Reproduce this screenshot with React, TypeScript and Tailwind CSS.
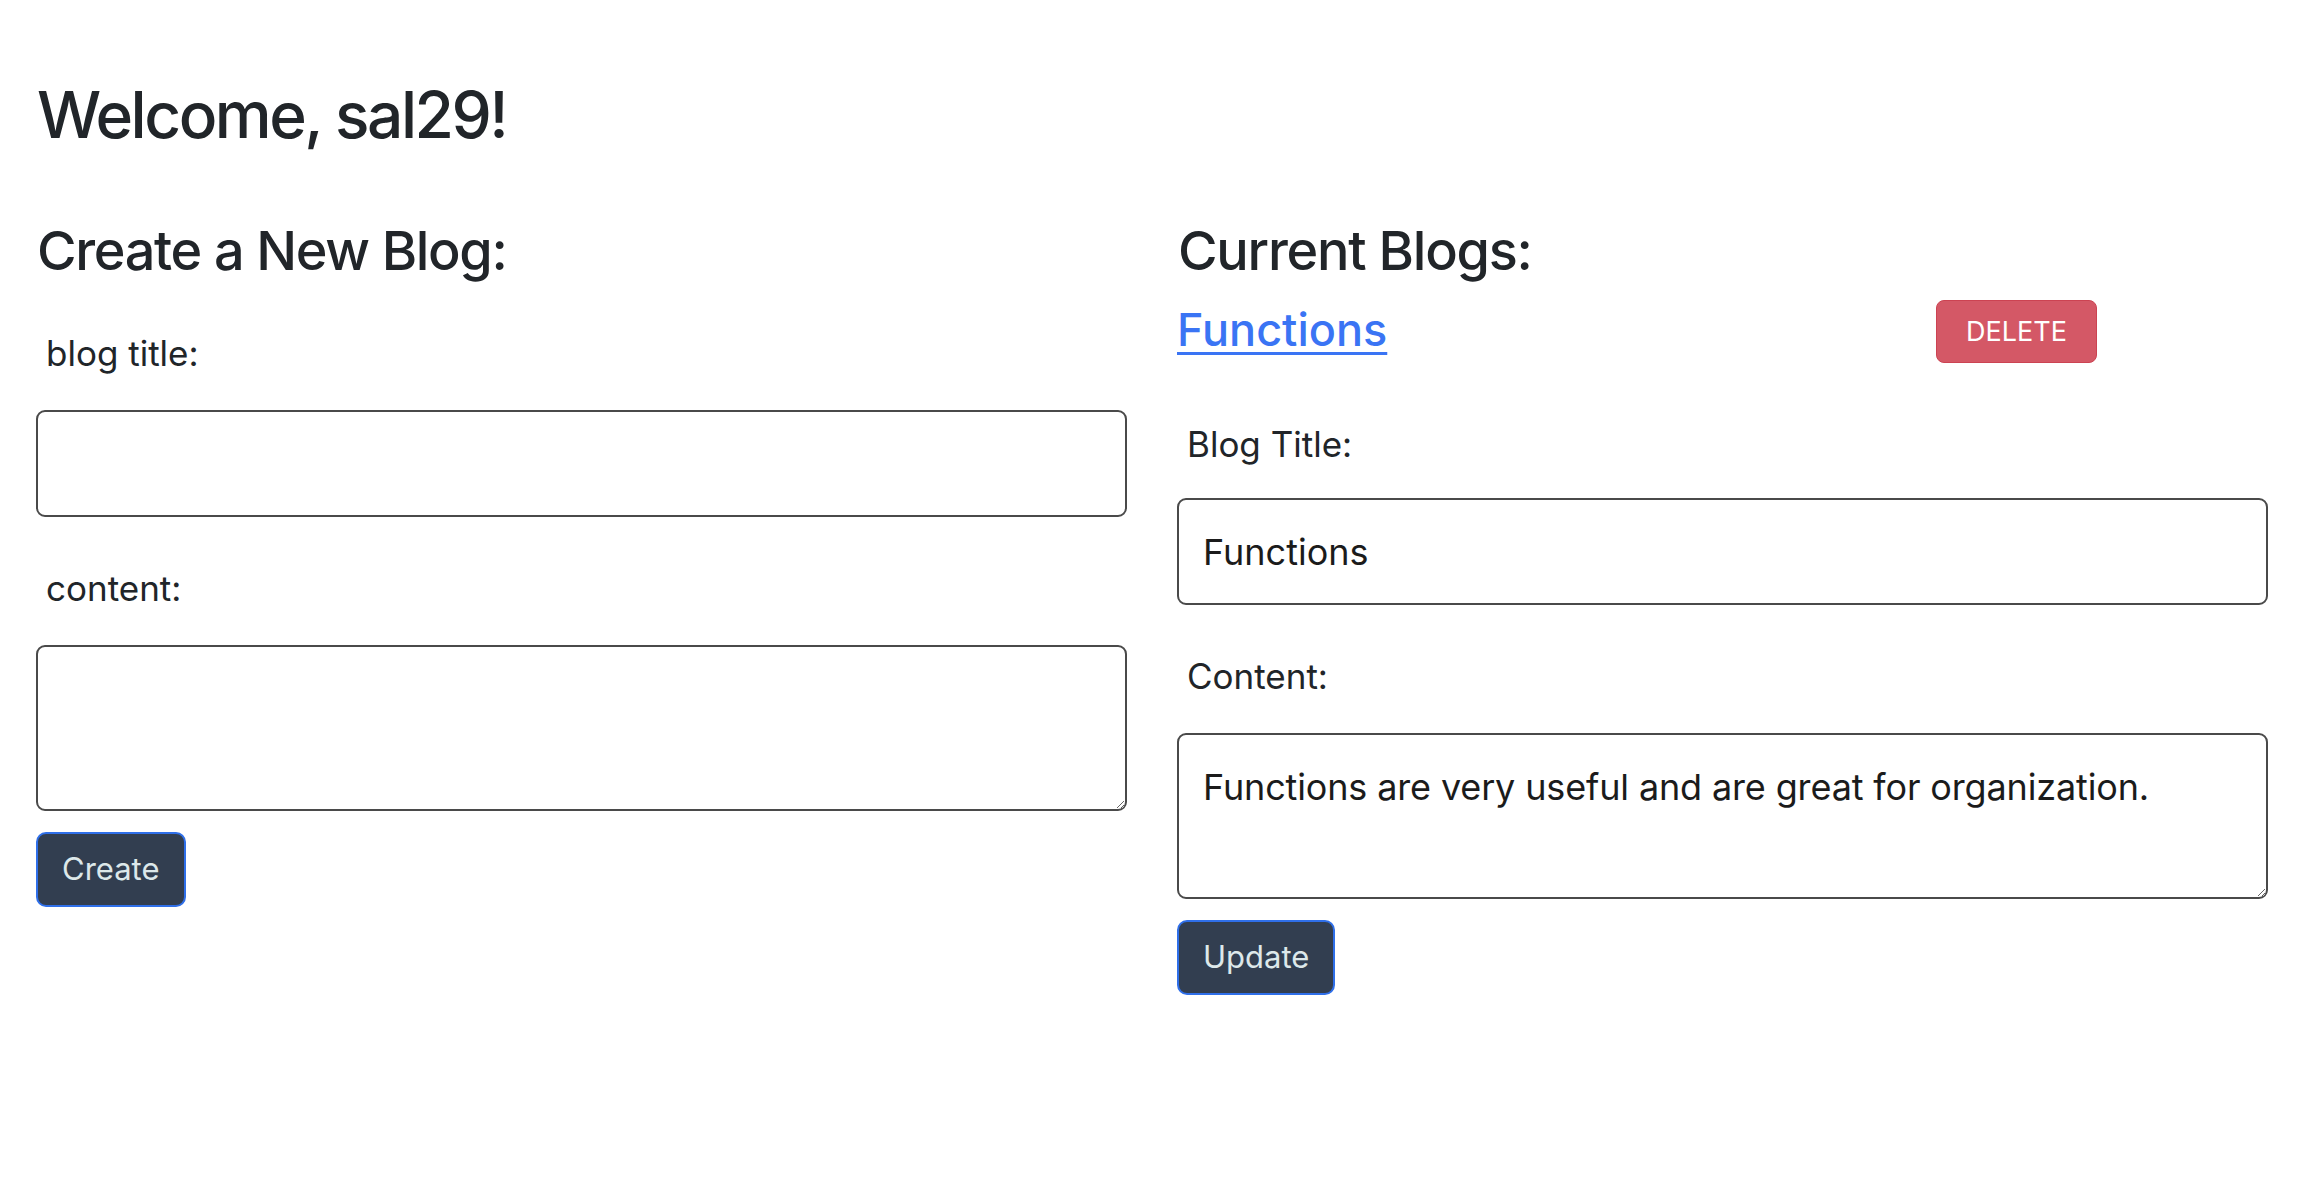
import React from 'react';

// ─── Small building blocks ────────────────────────────────────────────────────

function Label({ children, className = '' }: { children: React.ReactNode; className?: string }) {
  return (
    <label className={`block pl-[10px] text-[35px] leading-[1.5] text-[#212529] ${className}`}>
      {children}
    </label>
  );
}

function TextInput({ value = '', className = '' }: { value?: string; className?: string }) {
  return (
    <input
      type="text"
      defaultValue={value}
      className={`block h-[107px] w-full rounded-[9px] border-2 border-[#4a4a4a] bg-white px-[24px] text-[36px] text-[#1b1b1b] outline-none ${className}`}
    />
  );
}

function TextArea({ value = '', className = '' }: { value?: string; className?: string }) {
  return (
    <textarea
      defaultValue={value}
      className={`block h-[166px] w-full rounded-[9px] border-2 border-[#4a4a4a] bg-white px-[24px] pt-[25px] text-[36px] leading-[1.5] tracking-[-0.004em] text-[#1b1b1b] outline-none ${className}`}
    />
  );
}

function DarkButton({ children, className = '' }: { children: React.ReactNode; className?: string }) {
  return (
    <button
      type="button"
      className={`h-[75px] self-start rounded-[10px] border-2 border-[#2f6fe9] bg-[#323e50] px-[24px] text-[31px] text-[#dde8ea] ${className}`}
    >
      {children}
    </button>
  );
}

// ─── Page ─────────────────────────────────────────────────────────────────────

export default function App() {
  return (
    <div className="min-h-screen bg-white pl-[36px] pt-[77px] font-['Inter','Noto_Sans',sans-serif] text-[#212529]">
      <h1 className="pl-[1px] text-[64px] font-medium leading-[1.2] tracking-[-0.039em]">Welcome, sal29!</h1>

      <div className="mt-[65px] grid grid-cols-[1091px_1091px] gap-x-[50px]">
        {/* Create form */}
        <div className="flex flex-col">
          <h2 className="pl-[1px] text-[54px] font-medium leading-[1.2] tracking-[-0.025em]">Create a New Blog:</h2>
          <Label className="mt-[43px]">blog title:</Label>
          <TextInput className="mt-[31px]" />
          <Label className="mt-[45px]">content:</Label>
          <TextArea className="mt-[30px]" />
          <DarkButton className="mt-[21px]">Create</DarkButton>
        </div>

        {/* Existing blogs */}
        <div className="flex flex-col">
          <h2 className="pl-[1px] text-[54px] font-medium leading-[1.2] tracking-[-0.023em]">Current Blogs:</h2>
          <div className="mt-[13px] grid grid-cols-[759px_auto] items-center">
            <a
              href="#"
              className="justify-self-start text-[45px] font-medium leading-[1.2] text-[#3a74f4] underline decoration-[3px] underline-offset-[6px]"
            >
              Functions
            </a>
            <button
              type="button"
              className="mt-[3px] h-[63px] w-[161px] rounded-[8px] border-[1.5px] border-[#cc4352] bg-[#d45866] pt-[2px] text-[27px] text-white"
            >
              DELETE
            </button>
          </div>
          <Label className="mt-[55px]">Blog Title:</Label>
          <TextInput className="mt-[28px]" value="Functions" />
          <Label className="mt-[45px]">Content:</Label>
          <TextArea className="mt-[30px]" value="Functions are very useful and are great for organization." />
          <DarkButton className="mt-[21px]">Update</DarkButton>
        </div>
      </div>
    </div>
  );
}
